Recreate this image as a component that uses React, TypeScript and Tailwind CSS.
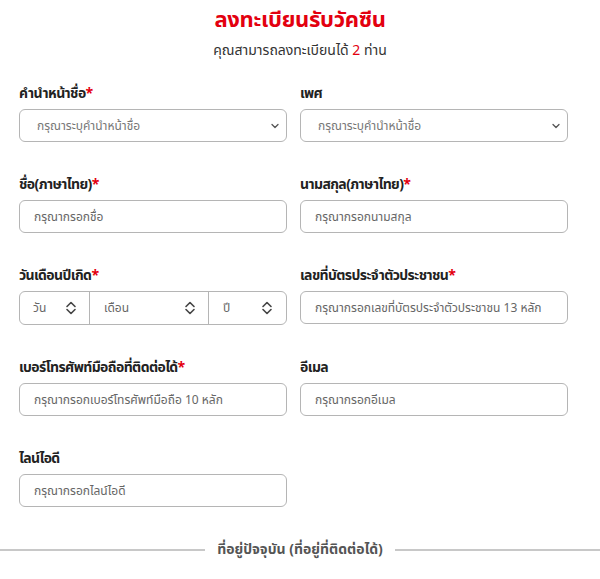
import React from "react";

const Chevrons = () => (
  <svg width="12" height="16" viewBox="0 0 12 16" fill="none" stroke="#444" strokeWidth="1.6" strokeLinecap="round" strokeLinejoin="round">
    <path d="M2 6.5 L6 2.5 L10 6.5" />
    <path d="M2 9.5 L6 13.5 L10 9.5" />
  </svg>
);

const ChevronDown = () => (
  <svg width="10" height="10" viewBox="0 0 10 10" fill="none" stroke="#555" strokeWidth="1.3" strokeLinecap="round" strokeLinejoin="round">
    <path d="M2 3.5 L5 6.5 L8 3.5" />
  </svg>
);

function Label({ text, req }: { text: string; req?: boolean }) {
  return (
    <div className="text-[14px] font-bold tracking-[-0.6px] text-[#222] leading-[20px] h-[20px] mb-[5px] mt-[4px]">
      {text}
      {req && <span className="text-[#e3000f]">*</span>}
    </div>
  );
}

function TextBox({ ph }: { ph: string }) {
  return (
    <div className="h-[33px] rounded-[6px] border border-[#b5b5b5] bg-white flex items-center pl-[14px] text-[12px] text-[#666] whitespace-nowrap overflow-hidden">
      {ph}
    </div>
  );
}

function SelectBox({ ph }: { ph: string }) {
  return (
    <div className="h-[33px] rounded-[6px] border border-[#b5b5b5] bg-white flex items-center justify-between pl-[17px] pr-[6px] text-[12px] text-[#777]">
      <span>{ph}</span>
      <ChevronDown />
    </div>
  );
}

export default function App() {
  return (
    <div
      className="w-[600px] h-[579px] bg-white overflow-hidden"
      style={{ fontFamily: '"Noto Sans Thai", "Noto Sans", "Liberation Sans", sans-serif' }}
    >
      <div className="pt-[6px] text-center">
        <div className="text-[22px] font-bold tracking-[-0.3px] text-[#e3000f] leading-[30px]">ลงทะเบียนรับวัคซีน</div>
        <div className="mt-[5px] text-[14px] text-[#333] leading-[20px]">
          คุณสามารถลงทะเบียนได้ <span className="text-[#e3000f]">2</span> ท่าน
        </div>
      </div>

      <div className="px-[19px] mt-[19px] grid grid-cols-[268px_268px] gap-x-[13px] gap-y-[29px]">
        <div>
          <Label text="คำนำหน้าชื่อ" req />
          <SelectBox ph="กรุณาระบุคำนำหน้าชื่อ" />
        </div>
        <div>
          <Label text="เพศ" />
          <SelectBox ph="กรุณาระบุคำนำหน้าชื่อ" />
        </div>
        <div>
          <Label text="ชื่อ(ภาษาไทย)" req />
          <TextBox ph="กรุณากรอกชื่อ" />
        </div>
        <div>
          <Label text="นามสกุล(ภาษาไทย)" req />
          <TextBox ph="กรุณากรอกนามสกุล" />
        </div>
        <div>
          <Label text="วันเดือนปีเกิด" req />
          <div className="h-[34px] rounded-[6px] border border-[#b5b5b5] bg-white flex text-[12px] text-[#666]">
            <div className="w-[70px] flex items-center justify-between pl-[13px] pr-[12px] border-r border-[#b5b5b5]">
              <span>วัน</span>
              <Chevrons />
            </div>
            <div className="w-[119px] flex items-center justify-between pl-[14px] pr-[12px] border-r border-[#b5b5b5]">
              <span>เดือน</span>
              <Chevrons />
            </div>
            <div className="flex-1 flex items-center justify-between pl-[14px] pr-[13px]">
              <span>ปี</span>
              <Chevrons />
            </div>
          </div>
        </div>
        <div>
          <Label text="เลขที่บัตรประจำตัวประชาชน" req />
          <TextBox ph="กรุณากรอกเลขที่บัตรประจำตัวประชาชน 13 หลัก" />
        </div>
        <div>
          <Label text="เบอร์โทรศัพท์มือถือที่ติดต่อได้" req />
          <TextBox ph="กรุณากรอกเบอร์โทรศัพท์มือถือ 10 หลัก" />
        </div>
        <div>
          <Label text="อีเมล" />
          <TextBox ph="กรุณากรอกอีเมล" />
        </div>
        <div>
          <Label text="ไลน์ไอดี" />
          <TextBox ph="กรุณากรอกไลน์ไอดี" />
        </div>
      </div>

      <div className="mt-[33px] flex items-center gap-[12px]">
        <div className="flex-1 h-[2px] bg-[#c8c8c8]" />
        <div className="text-[14px] font-bold text-[#555] leading-[20px]">ที่อยู่ปัจจุบัน (ที่อยู่ที่ติดต่อได้)</div>
        <div className="flex-1 h-[2px] bg-[#c8c8c8]" />
      </div>
    </div>
  );
}
